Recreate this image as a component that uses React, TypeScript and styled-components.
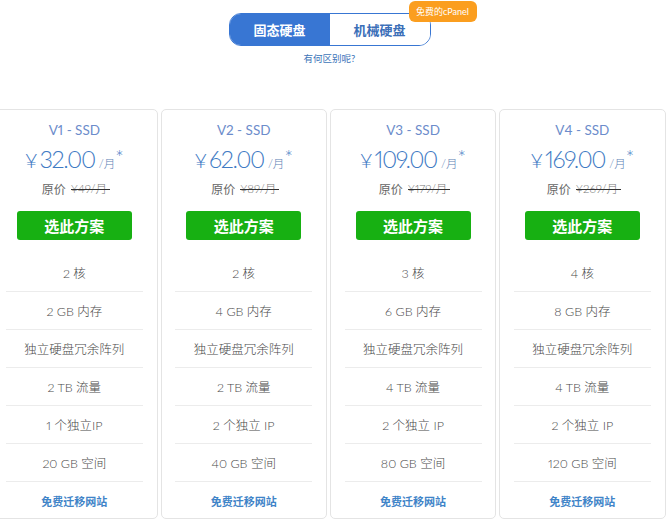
import * as React from 'react';
import styled, { createGlobalStyle } from 'styled-components';

const Global = createGlobalStyle`
    html, body {
        margin: 0;
        padding: 0;
        background: #fff;
        overflow: hidden;
    }
    body {
        font-family: Lato, "Noto Sans CJK SC", sans-serif;
        font-weight: 300;
        font-variant-numeric: proportional-nums;
        color: #555;
    }
`;

const Page = styled.div`
    width: 666px;
    height: 520px;
    overflow: hidden;
`;
const Header = styled.div`
    display: flex;
    flex-direction: column;
    align-items: center;
    padding-top: 13px;
    height: 96px;
    box-sizing: content-box;
`;
const Toggle = styled.div`
    position: relative;
    display: flex;
    width: 202px;
    height: 33px;
    box-sizing: border-box;
    margin-left: -7px;
    border: 1px solid #3876d3;
    border-radius: 12px;
`;
const ToggleItem = styled.div<{ $active?: boolean }>`
    flex: 1;
    display: flex;
    align-items: center;
    justify-content: center;
    font-size: 13px;
    font-weight: 700;
    background: ${(p) => (p.$active ? '#3876d3' : '#fff')};
    color: ${(p) => (p.$active ? '#fff' : '#3b6fb8')};
    border-radius: ${(p) => (p.$active ? '11px 0 0 11px' : '0 11px 11px 0')};
`;
const Badge = styled.div`
    position: absolute;
    top: -13px;
    right: -47px;
    width: 68px;
    height: 21px;
    display: flex;
    align-items: center;
    justify-content: center;
    border-radius: 6px;
    background: #fb9e1f;
    color: #fff;
    font-size: 9px;
    font-weight: 400;
    white-space: nowrap;
`;
const DiffLink = styled.div`
    margin-top: 5px;
    margin-left: -7px;
    font-size: 9.5px;
    font-weight: 400;
    color: #3d74b8;
`;
const Plans = styled.div`
    display: flex;
    gap: 3px;
    margin-left: -8.8px;
`;
const Card = styled.div`
    flex: 0 0 166.33px;
    box-sizing: border-box;
    height: 410px;
    border: 1px solid #e4e4e4;
    border-radius: 5px;
    display: flex;
    flex-direction: column;
    align-items: center;
    background: #fff;
    & > * {
        flex-shrink: 0;
    }
`;
const PlanName = styled.div`
    margin-top: 12px;
    height: 17px;
    line-height: 17px;
    font-size: 13.5px;
    font-weight: 400;
    color: #6c8ccb;
`;
const PriceRow = styled.div`
    display: flex;
    align-items: baseline;
    margin-top: 4px;
    height: 32px;
    color: #3f7bc4;
    white-space: nowrap;
`;
const Yen = styled.span`
    font-size: 20px;
    line-height: 32px;
    font-weight: 300;
    margin-right: 2px;
`;
const Price = styled.span`
    font-size: 23.5px;
    line-height: 32px;
    font-weight: 300;
    letter-spacing: -1.4px;
`;
const Per = styled.span`
    font-size: 11.5px;
    margin-left: 4px;
    color: #5d7fb5;
`;
const Star = styled.sup`
    font-size: 20px;
    line-height: 0;
    align-self: flex-start;
    margin-top: 14px;
`;
const OldPriceRow = styled.div`
    display: flex;
    align-items: center;
    gap: 5px;
    height: 20px;
    margin-top: 3px;
    margin-left: 3px;
    font-size: 12px;
    font-weight: 400;
    color: #666;
`;
const Strike = styled.span`
    position: relative;
    padding-right: 3px;
    font-size: 11.5px;
    font-weight: 300;
    color: #777;
    &::after {
        content: '';
        position: absolute;
        left: 0;
        right: 0;
        top: 9px;
        height: 1px;
        background: #333;
    }
`;
const SelectButton = styled.button`
    margin-top: 13px;
    width: 115px;
    height: 29px;
    padding: 0;
    border: none;
    border-radius: 3px;
    background: #17b012;
    color: #fff;
    font-family: inherit;
    font-size: 15px;
    font-weight: 700;
`;
const Features = styled.div`
    margin-top: 14px;
    width: 137px;
    display: flex;
    flex-direction: column;
`;
const Feature = styled.div`
    height: 38px;
    box-sizing: border-box;
    border-bottom: 1px solid #ececec;
    display: flex;
    align-items: center;
    justify-content: center;
    font-size: 12.5px;
    font-weight: 300;
    color: #4a4a4a;
    white-space: pre;
`;
const Migrate = styled.div`
    height: 37px;
    display: flex;
    align-items: center;
    justify-content: center;
    font-size: 11px;
    font-weight: 700;
    color: #3f84c8;
`;

const plans = [
    { name: 'V1 - SSD', price: '32.00', old: '49', cores: 2, ram: 2, traffic: 2, ip: '1 个独立IP', disk: 20 },
    { name: 'V2 - SSD', price: '62.00', old: '89', cores: 2, ram: 4, traffic: 2, ip: '2 个独立 IP', disk: 40 },
    { name: 'V3 - SSD', price: '109.00', old: '179', cores: 3, ram: 6, traffic: 4, ip: '2 个独立 IP', disk: 80 },
    { name: 'V4 - SSD', price: '169.00', old: '269', cores: 4, ram: 8, traffic: 4, ip: '2 个独立 IP', disk: 120 },
];

export default function App() {
    return (
        <Page>
            <Global />
            <Header>
                <Toggle>
                    <ToggleItem $active>固态硬盘</ToggleItem>
                    <ToggleItem>机械硬盘</ToggleItem>
                    <Badge>免费的cPanel</Badge>
                </Toggle>
                <DiffLink>有何区别呢?</DiffLink>
            </Header>
            <Plans>
                {plans.map((plan) => (
                    <Card key={plan.name}>
                        <PlanName>{plan.name}</PlanName>
                        <PriceRow>
                            <Yen>¥</Yen>
                            <Price>{plan.price}</Price>
                            <Per>/月</Per>
                            <Star>*</Star>
                        </PriceRow>
                        <OldPriceRow>
                            原价 <Strike>¥{plan.old}/月</Strike>
                        </OldPriceRow>
                        <SelectButton>选此方案</SelectButton>
                        <Features>
                            <Feature>{plan.cores} 核</Feature>
                            <Feature>{plan.ram} GB 内存</Feature>
                            <Feature>独立硬盘冗余阵列</Feature>
                            <Feature>{plan.traffic} TB 流量</Feature>
                            <Feature>{plan.ip}</Feature>
                            <Feature>{plan.disk} GB 空间</Feature>
                            <Migrate>免费迁移网站</Migrate>
                        </Features>
                    </Card>
                ))}
            </Plans>
        </Page>
    );
}
